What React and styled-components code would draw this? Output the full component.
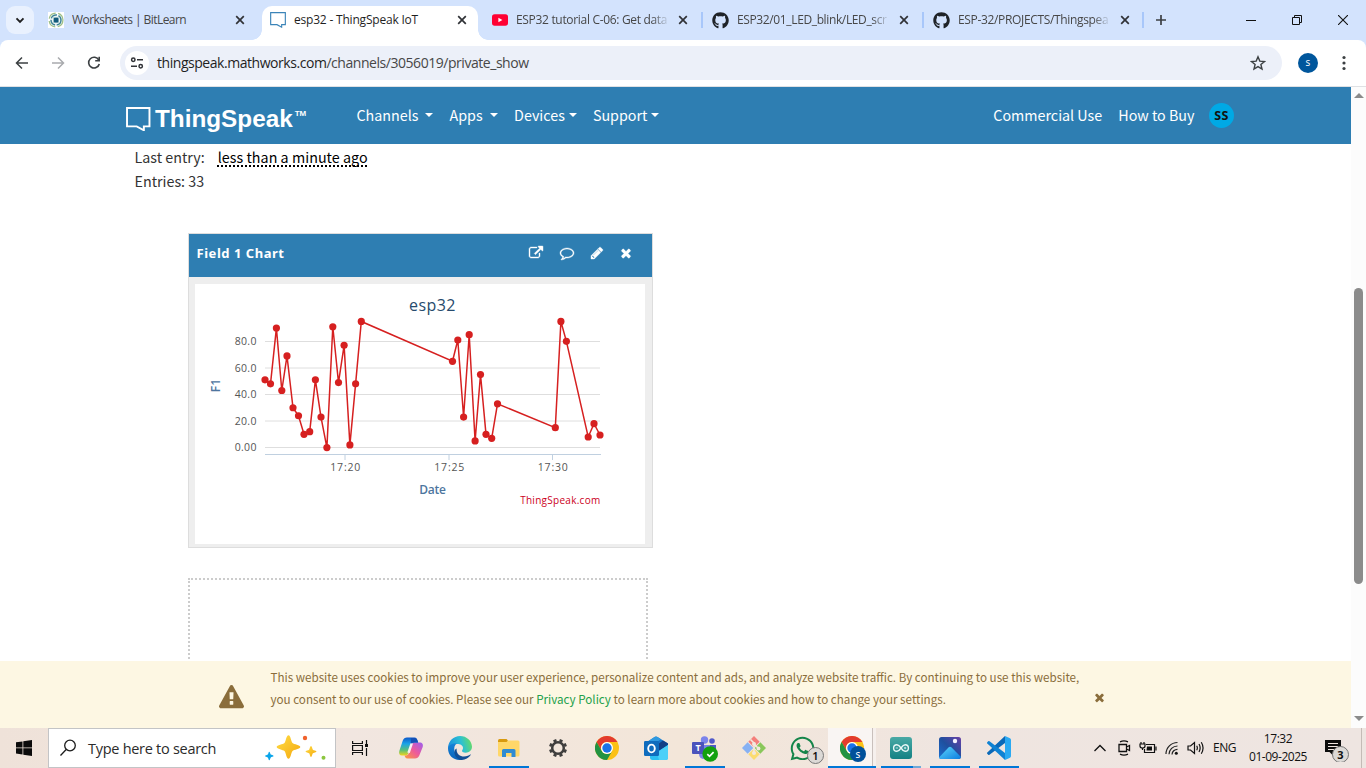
import React from 'react';
import styled, { createGlobalStyle } from 'styled-components';
import { FaGithub, FaWhatsapp } from 'react-icons/fa';

const ui = '"Open Sans", "Noto Sans", sans-serif';
const site = '"Noto Sans CJK SC", "Noto Sans", sans-serif';

const GlobalStyle = createGlobalStyle`
  * { box-sizing: border-box; }
  body { margin: 0; background: #fff; overflow: hidden; }
  svg { display: block; flex: none; }
`;

const Screen = styled.div`
  width: 1366px;
  height: 768px;
  display: flex;
  flex-direction: column;
  overflow: hidden;
  font-family: ${ui};
`;

/* ---------- browser chrome ---------- */

const TabStrip = styled.div`
  height: 40px;
  flex: none;
  display: flex;
  align-items: center;
  background: #d3e3fd;
  padding-left: 6px;
`;

const TabSearch = styled.div`
  width: 28px;
  height: 28px;
  border-radius: 9px;
  background: #e9f1fe;
  display: grid;
  place-items: center;
`;

const Tab = styled.div`
  width: ${p => p.$w}px;
  height: ${p => (p.$active ? 34 : 40)}px;
  align-self: flex-end;
  display: flex;
  align-items: center;
  position: relative;
  padding: ${p => (p.$active ? '0 8px 6px 8px' : `0 0 0 ${p.$pad || 14}px`)};
  background: ${p => (p.$active ? '#fff' : 'transparent')};
  border-radius: 10px 10px 0 0;
  &::before, &::after {
    content: '';
    display: ${p => (p.$active ? 'block' : 'none')};
    position: absolute;
    bottom: 0;
    width: 10px;
    height: 10px;
  }
  &::before { left: -10px; background: radial-gradient(circle at 0 0, transparent 9.5px, #fff 10px); }
  &::after { right: -10px; background: radial-gradient(circle at 100% 0, transparent 9.5px, #fff 10px); }
`;

const TabTitle = styled.span`
  width: ${p => p.$w}px;
  margin: 0 ${p => p.$end || 0}px 0 8px;
  overflow: hidden;
  white-space: nowrap;
  font-size: 12px;
  line-height: 18px;
  letter-spacing: ${p => p.$ls}px;
  color: ${p => (p.$active ? '#1f1f1f' : '#474747')};
  ${p => p.$fade && 'mask-image: linear-gradient(90deg, #000 calc(100% - 16px), rgba(0, 0, 0, 0.1));'}
`;

const TabDivider = styled.span`
  width: 2px;
  height: 16px;
  background: #a8c7fa;
`;

const NewTab = styled.div`
  width: 34px;
  display: grid;
  place-items: center;
`;

const WindowButtons = styled.div`
  margin-left: auto;
  display: flex;
`;

const WindowButton = styled.div`
  width: 46px;
  height: 40px;
  display: grid;
  place-items: center;
`;

const ToolbarBack = styled.div`
  flex: none;
  background: #d3e3fd;
`;

const Toolbar = styled.div`
  height: 47px;
  display: flex;
  align-items: center;
  background: #fff;
  border-radius: 8px 8px 0 0;
  border-bottom: 1px solid #dfe1e4;
  padding-left: 4px;
`;

const ToolButton = styled.div`
  width: 36px;
  display: grid;
  place-items: center;
`;

const Omnibox = styled.div`
  width: 1162px;
  height: 34px;
  margin-left: 8px;
  border-radius: 17px;
  background: #ecf0f9;
  display: flex;
  align-items: center;
  padding: 0 16px 0 5px;
`;

const SiteInfo = styled.div`
  width: 24px;
  height: 24px;
  border-radius: 50%;
  background: #fff;
  display: grid;
  place-items: center;
`;

const Url = styled.div`
  flex: 1;
  margin-left: 8px;
  padding-bottom: 2px;
  font-size: 14px;
  letter-spacing: -0.455px;
  color: #474747;
  b { font-weight: 400; color: #1f1f1f; }
`;

const Profile = styled.div`
  width: 20px;
  height: 20px;
  margin: 0 18px 0 16px;
  border-radius: 50%;
  background: #00569c;
  color: #fff;
  font-size: 10px;
  line-height: 19px;
  text-align: center;
`;

/* ---------- page ---------- */

const Viewport = styled.div`
  height: 641px;
  flex: none;
  display: flex;
`;

const Page = styled.div`
  width: 1351px;
  display: flex;
  flex-direction: column;
  font-family: ${site};
  background: #fff;
`;

const Navbar = styled.nav`
  height: 57px;
  flex: none;
  display: flex;
  align-items: center;
  background: #2e7eb2;
  padding: 0 117px 0 126px;
`;

const Logo = styled.div`
  display: flex;
  align-items: center;
  width: 230.5px;
  padding-top: 7px;
  color: #fff;
`;

const LogoText = styled.span`
  margin: 0 0 1px 4.5px;
  font: 700 24.3px/28px "Liberation Sans", Arial, sans-serif;
`;

const Trademark = styled.span`
  align-self: flex-start;
  margin: 4px 0 0 2px;
  font: 700 8px/10px "Liberation Sans", Arial, sans-serif;
`;

const NavItem = styled.a`
  display: flex;
  align-items: center;
  padding-bottom: 2px;
  font-size: 14.3px;
  line-height: 24px;
  color: #fff;
  white-space: nowrap;
  margin-right: ${p => p.$gap || 0}px;
`;

const Caret = styled.i`
  margin-left: ${p => p.$gap}px;
  border: 4px solid transparent;
  border-top-color: #fff;
  border-bottom: 0;
`;

const NavRight = styled.div`
  margin-left: auto;
  display: flex;
  align-items: center;
`;

const Avatar = styled.div`
  width: 25px;
  height: 25px;
  border-radius: 50%;
  background: #00a9e5;
  color: #111;
  font: 700 12.5px/25px "Noto Sans", sans-serif;
  letter-spacing: 0.3px;
  text-align: center;
`;

const Content = styled.main`
  flex: 1;
  min-height: 0;
  overflow: hidden;
  padding-left: 134.5px;
`;

const InfoLine = styled.div`
  height: 24px;
  font-size: 14.3px;
  line-height: 24px;
  color: #333;
  padding-top: 1px;
  white-space: pre;
`;

const TimeAgo = styled.span`
  margin-left: 13px;
  color: #000;
  letter-spacing: 0.03px;
  text-decoration: underline dotted 1.5px;
  text-underline-offset: 1.5px;
  text-decoration-skip-ink: none;
`;

const ChartCard = styled.section`
  width: 465px;
  height: 315px;
  margin: 41px 0 0 53.5px;
  border: 1px solid #ddd;
  background: #eee;
`;

const CardHeader = styled.header`
  height: 43px;
  display: flex;
  align-items: center;
  padding: 0 19px 6px 7.5px;
  background: #2e7eb2;
  color: #fff;
`;

const CardTitle = styled.h2`
  margin: 0 auto 0 0;
  font: 700 13px/18px "Noto Sans", sans-serif;
  letter-spacing: 0.53px;
`;

const CardIcon = styled.span`
  margin-left: ${p => p.$gap}px;
`;

const ChartArea = styled.div`
  width: 450px;
  height: 260px;
  margin: 7px 0 0 6px;
  background: #fff;
`;

const ChartLabel = styled.text`
  font-family: ${ui};
  font-size: ${p => p.$size || 10.5}px;
  font-weight: ${p => p.$weight || 400};
  letter-spacing: ${p => p.$ls || 0}px;
  fill: ${p => p.$color || '#555'};
  text-anchor: ${p => p.$anchor || 'middle'};
`;

const DropSlot = styled.div`
  width: 460px;
  height: 300px;
  margin: 30px 0 0 53.5px;
  border: 2px dotted #ccc;
`;

const CookieBar = styled.aside`
  height: 67px;
  flex: none;
  display: flex;
  align-items: center;
  background: #fdf7e3;
  color: #8a6d3b;
  padding-left: 219px;
`;

const WarningMark = styled.span`
  padding-top: 5px;
`;

const CookieText = styled.p`
  width: 822.5px;
  margin: 0 0 13px 26.5px;
  font-size: 11.645px;
  line-height: 22px;
  white-space: nowrap;
  a { color: #22a04b; }
`;

const CloseMark = styled.span`
  padding-top: 6px;
`;

const ScrollTrack = styled.div`
  width: 15px;
  background: #fcfcfc;
  display: flex;
  flex-direction: column;
  align-items: center;
  padding: 6px 0 7px;
`;

const ScrollArrow = styled.i`
  border: 5px solid transparent;
  ${p => (p.$up ? 'border-bottom-color: #8b8b8b; border-top: 0;' : 'border-top-color: #8b8b8b; border-bottom: 0; margin-top: auto;')}
`;

const ScrollThumb = styled.div`
  width: 9px;
  height: 296px;
  margin-top: 190px;
  border-radius: 5px;
  background: #8b8b8b;
`;

/* ---------- taskbar ---------- */

const Taskbar = styled.footer`
  height: 40px;
  flex: none;
  display: flex;
  background: linear-gradient(90deg, #efe2d9 0, #f1e6e0 350px, #f3e6d9 680px, #efe5e0 950px, #eee5e1 100%);
  color: #111;
`;

const StartButton = styled.div`
  width: 48px;
  display: grid;
  place-items: center;
`;

const SearchBox = styled.div`
  width: 288px;
  display: flex;
  align-items: center;
  background: #fff;
  border: 1px solid #c3c4c6;
  padding: 0 8px 0 10px;
  font-size: 14.5px;
  letter-spacing: -0.28px;
  color: #2b2b2b;
`;

const SearchHint = styled.span`
  flex: 1;
  margin-left: 11px;
`;

const TaskApp = styled.div`
  width: ${p => p.$w || 49}px;
  margin-left: ${p => p.$gap || 0}px;
  height: 40px;
  position: relative;
  display: grid;
  place-items: center;
  background: ${p => (p.$front ? 'linear-gradient(90deg, transparent 1px, #f9f5f3 1px, #f9f5f3 45px, #c9c0bc 45px, #c9c0bc 46px, #f6f0ed 46px)' : 'none')};
  &::after {
    content: '';
    display: ${p => (p.$open ? 'block' : 'none')};
    position: absolute;
    bottom: 0;
    left: ${p => (p.$front ? 1 : 5)}px;
    right: ${p => (p.$front ? 0 : 4)}px;
    height: 2px;
    background: ${p => (p.$stack ? 'linear-gradient(90deg, #0077d7 32px, #71a9d8 32px)' : '#0077d7')};
  }
`;

const Tray = styled.div`
  margin-left: auto;
  display: flex;
  align-items: center;
  font-size: 12px;
`;

const TrayIcon = styled.div`
  width: 24px;
  display: grid;
  place-items: center;
`;

const Lang = styled.span`
  width: 40px;
  padding: 0 0 1px 5px;
  letter-spacing: -0.476px;
`;

const Clock = styled.div`
  width: 58px;
  margin-left: 1px;
  text-align: center;
  line-height: 18px;
  padding-bottom: 1px;
  letter-spacing: -0.46px;
  white-space: nowrap;
`;

const Notice = styled.div`
  width: 55px;
  height: 40px;
  display: flex;
  align-items: center;
  padding-left: 18px;
  border-right: 1px solid #c4bbb6;
  margin-right: 4px;
`;

/* ---------- icons ---------- */

const Ic = ({ s = 24, w, h, vb, children, ...r }) => (
  <svg width={w || s} height={h || s} viewBox={vb || `0 0 ${w || s} ${h || s}`} fill="none" {...r}>{children}</svg>
);

const Cross = () => (
  <Ic s={16} stroke="#303236" strokeWidth="1.7"><path d="M4.2 4.2 11.8 11.8M11.8 4.2 4.2 11.8" /></Ic>
);

const fa = {
  times: 'M1490 1322q0 40-28 68l-136 136q-28 28-68 28t-68-28l-294-294-294 294q-28 28-68 28t-68-28l-136-136q-28-28-28-68t28-68l294-294-294-294q-28-28-28-68t28-68l136-136q28-28 68-28t68 28l294 294 294-294q28-28 68-28t68 28l136 136q28 28 28 68t-28 68l-294 294 294 294q28 28 28 68z',
  pencil: 'M491 1536l91-91-235-235-91 91v107h128v128h107zm523-928q0-22-22-22-10 0-17 7l-542 542q-7 7-7 17 0 22 22 22 10 0 17-7l542-542q7-7 7-17zm-54-192l416 416-832 832h-416v-416zm683 96q0 53-37 90l-166 166-416-416 166-165q36-38 90-38 53 0 91 38l235 234q37 39 37 91z',
  external: 'M1408 928v320q0 119-84.5 203.5t-203.5 84.5h-832q-119 0-203.5-84.5t-84.5-203.5v-832q0-119 84.5-203.5t203.5-84.5h704q14 0 23 9t9 23v64q0 14-9 23t-23 9h-704q-66 0-113 47t-47 113v832q0 66 47 113t113 47h832q66 0 113-47t47-113v-320q0-14 9-23t23-9h64q14 0 23 9t9 23zm384-864v512q0 26-19 45t-45 19-45-19l-176-176-652 652q-10 10-23 10t-23-10l-114-114q-10-10-10-23t10-23l652-652-176-176q-19-19-19-45t19-45 45-19h512q26 0 45 19t19 45z',
  comment: 'M896 384q-204 0-381.5 69.5t-282 187.5-104.5 255q0 112 71.5 213.5t201.5 175.5l87 50-27 96q-24 91-70 172 152-63 275-171l43-38 57 6q69 8 130 8 204 0 381.5-69.5t282-187.5 104.5-255-104.5-255-282-187.5-381.5-69.5zm896 512q0 174-120 321.5t-326 233-450 85.5q-70 0-145-8-198 175-460 242-49 14-114 22h-5q-15 0-27-10.5t-16-27.5v-1q-3-4-.5-12t2-10 4.5-9.5l6-9 7-8.5 8-9q7-8 31-34.5t34.5-38 31-39.5 32.5-51 27-59 26-76q-157-89-247.5-220t-90.5-281q0-130 71-248.5t191-204.5 286-136.5 348-50.5 348 50.5 286 136.5 191 204.5 71 248.5z',
  warning: 'M1024 1375v-190q0-14-9.5-23.5t-22.5-9.5h-192q-13 0-22.5 9.5t-9.5 23.5v190q0 14 9.5 23.5t22.5 9.5h192q13 0 22.5-9.5t9.5-23.5zm-2-374l18-459q0-12-10-19-13-11-24-11h-220q-11 0-24 11-10 7-10 21l17 457q0 10 10 16.5t24 6.5h185q14 0 23.5-6.5t10.5-16.5zm-14-934l768 1408q35 63-2 126-17 29-46.5 46t-63.5 17h-1536q-34 0-63.5-17t-46.5-46q-37-63-2-126l768-1408q17-31 47-49t65-18 65 18 47 49z',
};
const Fa = ({ name, s = 14, color = '#fff', bold = 0 }) => (
  <svg width={s} height={s} viewBox="0 0 1792 1792" fill={color} stroke={color} strokeWidth={bold} overflow="visible"><path d={fa[name]} /></svg>
);

const BitLearn = () => (
  <Ic s={16}>
    <rect width="16" height="16" fill="#fff" />
    <circle cx="8" cy="8" r="6.9" stroke="#9fc089" strokeWidth="1.3" strokeDasharray="9 2.5" />
    <circle cx="8" cy="8" r="5" stroke="#3f8596" strokeWidth="1.5" strokeDasharray="7 1.5" />
    <rect x="4.8" y="4.8" width="6.4" height="6.4" rx="1.5" fill="#b7d4d6" />
    <rect x="5.8" y="5.8" width="4.6" height="4.6" rx="1" fill="#125a7c" />
  </Ic>
);

const Bubble = ({ s, color, width }) => (
  <Ic s={s} vb="0 0 24 24"><path d="M1 1H23V19H17.5V22.800L10.500 19H1Z" stroke={color} strokeWidth={width} /></Ic>
);

const YouTube = () => (
  <Ic s={16}><rect y="2.3" width="16" height="11.4" rx="2.6" fill="#ff0033" /><path d="M6.4 5.7V10.3L10.4 8Z" fill="#fff" /></Ic>
);

const Chrome = () => (
  <Ic s={24}>
    <circle cx="12" cy="12" r="12" fill="#fbc116" />
    <path d="M1.6 6A12 12 0 0 1 22.4 6H12A6 6 0 0 0 6.8 15Z" fill="#e33b2e" />
    <path d="M1.6 6 6.8 15A6 6 0 0 0 17.2 15L12 24A12 12 0 0 1 1.6 6Z" fill="#229342" />
    <circle cx="12" cy="12" r="6" fill="#fff" />
    <circle cx="12" cy="12" r="4.7" fill="#1a73e8" />
  </Ic>
);

const Star4 = ({ x, y, r, fill }) => (
  <path transform={`translate(${x} ${y}) scale(${r})`} fill={fill} d="M0-1C.18-1 .22-.45 .34-.34S1-.18 1 0 .45.22.34.34.18 1 0 1-.22.45-.34.34-1 .18-1 0-.45-.22-.34-.34-.18-1 0-1Z" />
);

const Sparkles = () => (
  <Ic w={62} h={26}>
    <defs><linearGradient id="gold" x1="0" y1="0" x2="1" y2="1"><stop stopColor="#ffdd45" /><stop offset="1" stopColor="#f4a70d" /></linearGradient></defs>
    <Star4 x={23.5} y={12} r={11.8} fill="url(#gold)" />
    <Star4 x={46} y={16.5} r={5.5} fill="url(#gold)" />
    <Star4 x={4.3} y={21} r={4.3} fill="#0aa5ea" />
    <circle cx="40" cy="3" r="2.2" fill="#f0622d" />
    <circle cx="58.5" cy="22.800" r="2" fill="#8cc63f" />
  </Ic>
);

const Copilot = () => (
  <Ic s={26}>
    <defs>
      <linearGradient id="cp1" x1="0" y1="0" x2="0" y2="1"><stop stopColor="#0c58c9" /><stop offset=".35" stopColor="#1aa3e8" /><stop offset=".7" stopColor="#59c07a" /><stop offset="1" stopColor="#f2d51b" /></linearGradient>
      <linearGradient id="cp2" x1="1" y1="0" x2="0" y2="1"><stop stopColor="#9b5ff0" /><stop offset=".5" stopColor="#ee5a9b" /><stop offset="1" stopColor="#fb9d3c" /></linearGradient>
    </defs>
    <path d="M9 2.5H16.5C18.5 2.5 19 4 19.5 5.5L20.2 8H16C14 8 13.3 9.5 12.8 11L10.4 18C10 19.5 9.2 20.5 7.5 20.5H4C1.5 20.5 .6 18.5 1.3 16L4.8 5.5C5.5 3.5 7 2.5 9 2.5Z" fill="url(#cp1)" />
    <path d="M17 23.5H9.5C7.5 23.5 7 22 6.5 20.5H7.5C9.6 20.5 10.6 19 11 17.7L13.5 10C14 8.5 14.8 7.5 16.5 7.5H21.5C24.5 7.5 25.4 9.5 24.7 12L21.3 20.5C20.5 22.5 19 23.5 17 23.5Z" fill="url(#cp2)" />
    <path d="M13 3H16.5C18.5 3 19 4 19.5 5.5L20.2 7.6H16.5Q14.4 7.6 13.8 9L12.5 12.5Z" fill="#1550b5" />
    <path d="M15 8.500 11.800 18 9.300 17.600 12.500 8.300Z" fill="#f8f0f3" />
  </Ic>
);

const Edge = () => (
  <Ic s={24}>
    <defs>
      <linearGradient id="eg1" x1="0" y1=".5" x2="1" y2=".3"><stop stopColor="#1b8fdd" /><stop offset=".55" stopColor="#2cc0d3" /><stop offset="1" stopColor="#68dc63" /></linearGradient>
      <linearGradient id="eg2" x1="0" y1="0" x2="0" y2="1"><stop stopColor="#1683d8" /><stop offset="1" stopColor="#0b63b9" /></linearGradient>
    </defs>
    <path d="M0 11.5C.5 5 5.5 0 12 0 18.8 0 24 5 24 10.8 24 14.5 21 16.7 17.8 16.7 15 16.7 14 15.7 14 15 14 14.3 15 13.7 15 12 15 9.5 12.5 8 9 8 4.500 8 1 10.500 0 13Z" fill="url(#eg1)" />
    <path d="M0 12.500C.5 8.500 5 7 9 7.600 6.500 9 5.800 12 6.500 15 7.500 19.500 11 22 15 22.800 14 23.600 12.500 24 11.500 24 5 24 0 19 0 12.500Z" fill="url(#eg2)" />
    <path d="M8.700 12.500C8 17 11.500 20.500 16 20.500 19 20.500 21 19.500 22.200 18.600 22.600 18.300 23 18.700 22.700 19.100 20.500 22.300 17 24.200 13 23.900 8.500 22.500 6 19 6.500 15.500 6.700 14 7.500 12.900 8.700 12.500Z" fill="#114f96" />
  </Ic>
);

const Explorer = () => (
  <Ic s={24}>
    <path d="M1 4.500Q1 3 2.500 3H9.500L11 4.500V8H1Z" fill="#d89a0e" />
    <path d="M1 6H9.500L11 4.500H21Q22.500 4.500 22.500 6V19Q22.500 20.500 21 20.500H2.500Q1 20.500 1 19Z" fill="#ffd768" />
    <path d="M5 21V14.500Q5 13 6.500 13H17Q18.500 13 18.500 14.500V21H14.500V17H9V21Z" fill="#2f8bd3" />
  </Ic>
);

const Gear = () => (
  <Ic s={20} vb="-10 -10 20 20" stroke="#3f3e3d">
    <circle r="5.800" strokeWidth="2.500" />
    {[0, 45, 90, 135, 180, 225, 270, 315].map(a => <path key={a} transform={`rotate(${a + 22.500})`} d="M0-6.500V-9" strokeWidth="3.200" />)}
  </Ic>
);

const Outlook = () => (
  <Ic s={26}>
    <path d="M4 7 11.500 2Q13 1 14.500 2L25 8.500V14H4Z" fill="#1676cc" />
    <path d="M4 7 11.500 2Q13 1 14.500 2L18 4.200 8 11Z" fill="#2f9ae0" />
    <path d="M7 15 25 8.500V22.500Q25 25 22.500 25H9.500Q7 25 7 22.500Z" fill="#2bc0f3" />
    <path d="M11 12 20 5.500 25 8.500V10L14 17Z" fill="#123f86" />
    <path d="M14 17.500 25 10V22.500Q25 25 22.500 25H16Z" fill="#4bd0f8" />
    <rect x="1" y="6" width="15" height="15" rx="1.200" fill="#0f6cbd" />
    <ellipse cx="8.500" cy="13.500" rx="3.300" ry="3.900" stroke="#fff" strokeWidth="1.900" />
  </Ic>
);

const BadgeText = styled.text`
  font: 700 ${p => p.$s || 9}px "Noto Sans", sans-serif;
  text-anchor: middle;
`;

const Teams = () => (
  <Ic s={28}>
    <circle cx="13.500" cy="6" r="3.700" fill="#7b83eb" />
    <circle cx="21" cy="7" r="2.800" fill="#5059c9" />
    <path d="M16 11H25V18Q25 22 21 22H16Z" fill="#5059c9" />
    <path d="M8 11H19V20Q19 25 13.500 25 8 25 8 20Z" fill="#7b83eb" />
    <rect x="1" y="8" width="12" height="12" rx="1" fill="#4b53bc" />
    <BadgeText $s={9} x="7" y="17.300" fill="#fff">T</BadgeText>
    <circle cx="19.200" cy="20" r="7.800" fill="#13a10e" />
    <path d="M16.300 20.200 18.500 22.300 22.600 18.200" stroke="#fff" strokeWidth="1.700" />
  </Ic>
);

const GitApp = () => (
  <Ic s={26}>
    <g transform="rotate(45 13 13)">
      <rect x="4.500" y="4.500" width="8" height="8" fill="#f47f7b" />
      <rect x="13.500" y="4.500" width="8" height="8" fill="#89c75b" />
      <rect x="4.500" y="13.500" width="8" height="8" fill="#87b1f3" />
      <rect x="13.500" y="13.500" width="8" height="8" fill="#fbdc70" />
    </g>
    <path d="M9.500 4.500 13 8V18M13 9 17.500 13.500" stroke="#f3e8dd" strokeWidth="1.600" />
    <circle cx="13" cy="9" r="2" fill="#f3e8dd" />
    <circle cx="17.500" cy="13.500" r="1.900" fill="#f3e8dd" />
    <circle cx="13" cy="18" r="2" fill="#f3e8dd" />
  </Ic>
);

const Overlay = styled.span`
  position: absolute;
  display: grid;
  place-items: center;
  border-radius: 50%;
  width: ${p => p.$s}px;
  height: ${p => p.$s}px;
  left: ${p => p.$x}px;
  top: ${p => p.$y}px;
  background: ${p => p.$bg};
  color: ${p => p.$fg};
  border: ${p => (p.$line ? '1px solid #777' : '0')};
  font: ${p => p.$font} "Noto Sans", sans-serif;
`;

const Arduino = () => (
  <Ic s={22}>
    <defs><linearGradient id="ard" x1="0" y1="0" x2="0" y2="1"><stop stopColor="#49a9a5" /><stop offset="1" stopColor="#148184" /></linearGradient></defs>
    <rect width="22" height="22" rx="3" fill="url(#ard)" />
    <path d="M11 11C9.700 9 8.600 7.700 6.900 7.700A3.300 3.300 0 0 0 6.900 14.300C8.600 14.300 9.700 13 11 11S13.400 7.700 15.100 7.700A3.300 3.300 0 0 1 15.100 14.300C13.400 14.300 12.300 13 11 11Z" stroke="#e9f7f6" strokeWidth="1.400" />
    <path d="M5.700 11H8.100M13.900 11H16.300M15.100 9.800V12.200" stroke="#e9f7f6" strokeWidth=".8" />
  </Ic>
);

const Photos = () => (
  <Ic s={22}>
    <defs>
      <linearGradient id="ph1" x1="0" y1="1" x2="1" y2="0"><stop stopColor="#1c6fd0" /><stop offset=".5" stopColor="#1f4f9e" /><stop offset="1" stopColor="#6a3fa5" /></linearGradient>
      <linearGradient id="ph2" x1="0" y1="0" x2="1" y2="1"><stop stopColor="#5fd7fb" /><stop offset="1" stopColor="#0b7de0" /></linearGradient>
    </defs>
    <rect width="22" height="22" rx="2.500" fill="url(#ph1)" />
    <path d="M0 20.500 9.700 10.300Q11 9 12.400 10.300L22 20Q21.500 22 19.500 22H2.500Q.5 22 0 20.500Z" fill="url(#ph2)" />
    <circle cx="16" cy="4" r="2.200" fill="#f5f3ff" />
  </Ic>
);

const VSCode = () => (
  <Ic s={24}>
    <path d="M18 0 18 7 2.500 18.700Q1.800 19.200 1.200 18.700L.3 17.800Q-.3 17.200 .3 16.600Z" fill="#0b69b8" />
    <path d="M18 24V17L2.500 5.300Q1.800 4.800 1.200 5.300L.3 6.200Q-.3 6.800 .3 7.400Z" fill="#0f82d3" />
    <path d="M18 0 23 2.300Q24 2.800 24 4V20Q24 21.200 23 21.700L18 24Z" fill="#2aa9f2" />
  </Ic>
);

const WinLogo = () => (
  <Ic s={16}><path fill="#0b0b0b" d="M0 2.300 6.500 1.400V7.500H0ZM7.300 1.300 16 0V7.500H7.300ZM0 8.300H6.500V14.500L0 13.600ZM7.300 8.300H16V16L7.300 14.700Z" /></Ic>
);

/* ---------- chart ---------- */

const samples = [
  [265, 51], [270.5, 48], [276.4, 90], [281.8, 43], [287, 69], [293, 30], [298.5, 24], [304, 10], [309.7, 12],
  [315.4, 51], [321, 23], [326.9, 0], [332.8, 91], [338.5, 49], [344.1, 77], [349.9, 2], [355.6, 48], [361.3, 95],
  [452.5, 65], [457.8, 81], [463.6, 23], [469.2, 85], [475.1, 5], [480.5, 55], [486, 10], [491.7, 7], [497.5, 33],
  [555.3, 15], [560.9, 95], [566.4, 80], [588.2, 8], [594, 18], [600, 9.5],
].map(([x, v]) => [x - 195, 163.600 - v * 1.328]);

const Chart = () => (
  <Ic w={450} h={260}>
    {[['80.0', 57.500], ['60.0', 84], ['40.0', 110.500], ['20.0', 137], ['0.00', 163.500]].map(([t, y]) => (
      <g key={t}>
        <path d={`M70 ${y}H405`} stroke="#dedede" />
        <ChartLabel $anchor="end" $ls={0.350} x="61.800" y={y + 3.500}>{t}</ChartLabel>
      </g>
    ))}
    <path d="M70 170.500H406" stroke="#c0d0e0" />
    {[['17:20', 150], ['17:25', 254], ['17:30', 357.500]].map(([t, x]) => (
      <g key={t}>
        <path d={`M${x} 171V176`} stroke="#c0d0e0" />
        <ChartLabel $ls={0.800} x={x + 0.700} y="187">{t}</ChartLabel>
      </g>
    ))}
    <ChartLabel $size={16} $ls={0.400} $color="#274b6d" x="237.400" y="27">esp32</ChartLabel>
    <ChartLabel $size={12} $weight={600} $color="#4d759e" $ls={-0.200} x="237.500" y="210">Date</ChartLabel>
    <ChartLabel $size={12} $weight={600} $color="#4d759e" transform="translate(25 101.500) rotate(-90)">F1</ChartLabel>
    <ChartLabel $size={10} $ls={0.280} $color="#cc0022" $anchor="end" x="405.500" y="220">ThingSpeak.com</ChartLabel>
    <polyline points={samples.map(p => p.join(',')).join(' ')} stroke="#d62020" strokeWidth="1.500" />
    {samples.map(([x, y]) => <circle key={x} cx={x} cy={y} r="3.600" fill="#d62020" />)}
  </Ic>
);

export default function App() {
  return (
    <Screen>
      <GlobalStyle />
      <TabStrip>
        <TabSearch><Ic s={12} stroke="#1f1f1f" strokeWidth="1.900"><path d="M2.500 4.300 6 7.800 9.500 4.300" /></Ic></TabSearch>
        <Tab $w={228}>
          <BitLearn /><TabTitle $w={159.500} $ls={-0.560}>Worksheets | BitLearn</TabTitle><Cross />
        </Tab>
        <Tab $w={216} $active>
          <Bubble s={16} color="#3b84b8" width={1.700} />
          <TabTitle $w={160} $ls={-0.200} $active>esp32 - ThingSpeak IoT</TabTitle><Cross />
        </Tab>
        <Tab $w={223}>
          <YouTube /><TabTitle $w={152} $end={7} $ls={-0.320} $fade>ESP32 tutorial C-06: Get data</TabTitle><Cross />
        </Tab>
        <TabDivider />
        <Tab $w={219} $pad={9}>
          <FaGithub size={17} color="#1f2328" />
          <TabTitle $w={151} $end={8} $ls={-0.370} $fade>ESP32/01_LED_blink/LED_scr</TabTitle><Cross />
        </Tab>
        <TabDivider />
        <Tab $w={218} $pad={9}>
          <FaGithub size={17} color="#1f2328" />
          <TabTitle $w={151} $end={8} $ls={-0.340} $fade>ESP-32/PROJECTS/Thingspea</TabTitle><Cross />
        </Tab>
        <TabDivider />
        <NewTab><Ic s={12} stroke="#3c4043" strokeWidth="1.700"><path d="M6 1V11M1 6H11" /></Ic></NewTab>
        <WindowButtons>
          <WindowButton><Ic s={10} stroke="#111"><path d="M0 5.500H10" /></Ic></WindowButton>
          <WindowButton><Ic s={10} stroke="#111"><path d="M.5 2.500H7.500V9.500H.5ZM2.500 2.500V.5H9.500V7.500H7.500" /></Ic></WindowButton>
          <WindowButton><Ic s={10} stroke="#111" strokeWidth="1.100"><path d="M0 0 10 10M10 0 0 10" /></Ic></WindowButton>
        </WindowButtons>
      </TabStrip>

      <ToolbarBack>
        <Toolbar>
          <ToolButton><Ic s={16} stroke="#3c4043" strokeWidth="1.500"><path d="M14 8H3M8 2.500 2.500 8 8 13.500" /></Ic></ToolButton>
          <ToolButton><Ic s={16} stroke="#a9abae" strokeWidth="1.500"><path d="M2 8H13M8 2.500 13.500 8 8 13.500" /></Ic></ToolButton>
          <ToolButton><Ic s={16} stroke="#3c4043" strokeWidth="1.600"><path d="M12.800 5A5.400 5.400 0 1 0 13.300 9" /><path d="M13.200 1.800V5.800H9.200" /></Ic></ToolButton>
          <Omnibox>
            <SiteInfo>
              <Ic s={14} stroke="#303236" strokeWidth="1.500"><circle cx="3.300" cy="3.800" r="1.700" /><path d="M7 3.800H13M1 10.200H7" /><circle cx="10.700" cy="10.200" r="1.700" /></Ic>
            </SiteInfo>
            <Url><b>thingspeak.mathworks.com</b>/channels/3056019/private_show</Url>
            <Ic s={16} stroke="#3c4043" strokeWidth="1.400"><path d="M8 1.800 9.800 6.100 14.500 6.500 10.900 9.500 12 14.100 8 11.600 4 14.100 5.100 9.500 1.500 6.500 6.200 6.100Z" /></Ic>
          </Omnibox>
          <Profile>s</Profile>
          <Ic s={16}>
            <circle cx="8" cy="2.500" r="1.600" fill="#3c4043" /><circle cx="8" cy="8" r="1.600" fill="#3c4043" /><circle cx="8" cy="13.500" r="1.600" fill="#3c4043" />
          </Ic>
        </Toolbar>
      </ToolbarBack>

      <Viewport>
        <Page>
          <Navbar>
            <Logo>
              <Bubble s={24.500} color="#fff" width={1.900} />
              <LogoText>ThingSpeak</LogoText>
              <Trademark>TM</Trademark>
            </Logo>
            <NavItem $gap={16}>Channels<Caret $gap={7} /></NavItem>
            <NavItem $gap={16.500}>Apps<Caret $gap={7} /></NavItem>
            <NavItem $gap={16}>Devices<Caret $gap={4} /></NavItem>
            <NavItem>Support<Caret $gap={4} /></NavItem>
            <NavRight>
              <NavItem $gap={16}>Commercial Use</NavItem>
              <NavItem $gap={14.500}>How to Buy</NavItem>
              <Avatar>SS</Avatar>
            </NavRight>
          </Navbar>
          <Content>
            <InfoLine>Last entry:<TimeAgo>less than a minute ago</TimeAgo></InfoLine>
            <InfoLine>Entries: 33</InfoLine>
            <ChartCard>
              <CardHeader>
                <CardTitle>Field 1 Chart</CardTitle>
                <CardIcon><Fa name="external" bold={50} /></CardIcon>
                <CardIcon $gap={17}><Fa name="comment" bold={50} /></CardIcon>
                <CardIcon $gap={16}><Fa name="pencil" bold={50} /></CardIcon>
                <CardIcon $gap={15}><Fa name="times" bold={30} /></CardIcon>
              </CardHeader>
              <ChartArea><Chart /></ChartArea>
            </ChartCard>
            <DropSlot />
          </Content>
          <CookieBar>
            <WarningMark><Fa name="warning" s={25} color="#8a6d3b" /></WarningMark>
            <CookieText>
              This website uses cookies to improve your user experience, personalize content and ads, and analyze website traffic. By continuing to use this website,<br />
              you consent to our use of cookies. Please see our <a>Privacy Policy</a> to learn more about cookies and how to change your settings.
            </CookieText>
            <CloseMark><Fa name="times" s={13} color="#8a6d3b" /></CloseMark>
          </CookieBar>
        </Page>
        <ScrollTrack>
          <ScrollArrow $up />
          <ScrollThumb />
          <ScrollArrow />
        </ScrollTrack>
      </Viewport>

      <Taskbar>
        <StartButton><WinLogo /></StartButton>
        <SearchBox>
          <Ic s={18} stroke="#1c1c1c" strokeWidth="1.300"><circle cx="11" cy="6.500" r="5.300" /><path d="M7.200 10.500 1.500 16.500" /></Ic>
          <SearchHint>Type here to search</SearchHint>
          <Sparkles />
        </SearchBox>
        <TaskApp $w={48}>
          <Ic s={16} stroke="#111" strokeWidth="1.200"><path d="M.6 1V3.500H10.400V1M.6 15V12.500H10.400V15M.6 5.500H10.400V10.500H.6ZM14.500 0V4M14.500 8V16" /><rect x="13" y="4" width="3" height="3" fill="#111" stroke="none" /></Ic>
        </TaskApp>
        <TaskApp $gap={2}><Copilot /></TaskApp>
        <TaskApp><Edge /></TaskApp>
        <TaskApp $open><Explorer /></TaskApp>
        <TaskApp><Gear /></TaskApp>
        <TaskApp><Chrome /></TaskApp>
        <TaskApp><Outlook /></TaskApp>
        <TaskApp $open><Teams /></TaskApp>
        <TaskApp><GitApp /></TaskApp>
        <TaskApp>
          <FaWhatsapp size={27} color="#14854a" />
          <Overlay $s={17} $x={29} $y={19} $bg="#dcd9d6" $fg="#111" $line $font="600 11px/15px">1</Overlay>
        </TaskApp>
        <TaskApp $open $front>
          <Chrome />
          <Overlay $s={16} $x={23} $y={18} $bg="#00519a" $fg="#fff" $font="400 10px/14px">s</Overlay>
        </TaskApp>
        <TaskApp $open $stack><Arduino /></TaskApp>
        <TaskApp $open><Photos /></TaskApp>
        <TaskApp $open><VSCode /></TaskApp>
        <Tray>
          <TrayIcon><Ic s={14} stroke="#111" strokeWidth="1.300"><path d="M1.500 10 7 4.500 12.500 10" /></Ic></TrayIcon>
          <TrayIcon><Ic s={16} stroke="#111" strokeWidth="1.300"><path d="M3 4.500H10.500V11.500H3ZM10.500 7 13.500 5.500V10.500L10.500 9M4 1.800Q8 0 12 1.800M4 14.200Q8 16 12 14.200" /></Ic></TrayIcon>
          <TrayIcon><Ic w={18} h={14} stroke="#111" strokeWidth="1.200"><path d="M7 3.500H15.500V11.500H5.500V8M17 5.500V9.500M1 3H6V5Q6 7 3.500 7T1 5ZM2 1V3M5 1V3M3.500 7V9" /><path d="M8 5.500H13V9.500H7.500Z" fill="#111" stroke="none" /></Ic></TrayIcon>
          <TrayIcon><Ic s={14} stroke="#222" strokeWidth="1.200"><path d="M1 13A11.500 11.500 0 0 1 12.500 1.500M4 13.300A8.500 8.500 0 0 1 12.500 5M7 13.500A5.500 5.500 0 0 1 12.500 8.300" /><circle cx="11.300" cy="12.300" r="1.500" fill="#111" stroke="none" /></Ic></TrayIcon>
          <TrayIcon><Ic w={18} h={14} stroke="#111" strokeWidth="1.200"><path d="M1 5H3.500L7.500 1.500V12.500L3.500 9H1ZM9.700 4.800Q11 7 9.700 9.200M12 3Q14.300 7 12 11M14.300 1.300Q17.800 7 14.300 12.700" /></Ic></TrayIcon>
          <Lang>ENG</Lang>
          <Clock>17:32<br />01-09-2025</Clock>
          <Notice>
            <Ic w={28} h={28}>
              <path d="M0 6H16V18H8.500V22L4.500 18H0Z" fill="#0d0d0d" />
              <path d="M3 9.500H13M3 12.500H13M3 15.500H9" stroke="#efe5e0" />
              <circle cx="15.500" cy="21" r="8" fill="#dcd9d6" stroke="#777" transform="translate(0 -.5)" />
              <BadgeText $s={11} x="15.500" y="24.500" fill="#111">3</BadgeText>
            </Ic>
          </Notice>
        </Tray>
      </Taskbar>
    </Screen>
  );
}
